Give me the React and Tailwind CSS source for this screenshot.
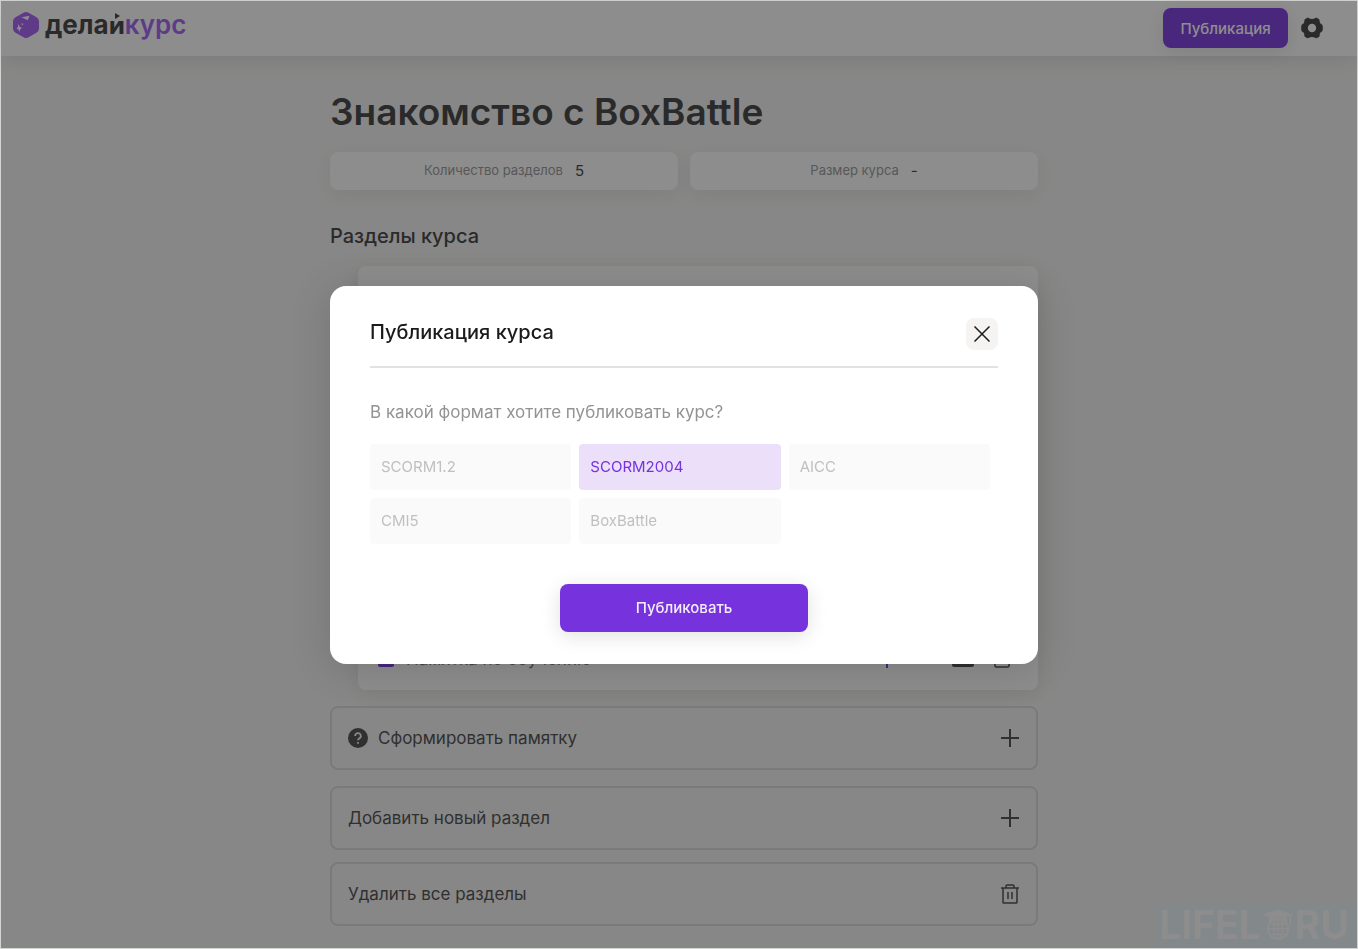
import React, { useState } from 'react';

const formats = ['SCORM1.2', 'SCORM2004', 'AICC', 'CMI5', 'BoxBattle'];

const PlusIcon = () => (
  <svg width="18" height="18" viewBox="0 0 18 18" className="mx-px" fill="none" stroke="currentColor" strokeWidth="2">
    <path d="M9 0v18M0 9h18" />
  </svg>
);

const TrashIcon = () => (
  <svg width="20" height="20" viewBox="0 0 20 20" fill="none" stroke="currentColor" strokeWidth="1.5">
    <path d="M1 4h18M3 4v14.2c0 .5.3.8.8.8h12.4c.5 0 .8-.3.8-.8V4M6 4V2c0-.6.4-1 1-1h6c.6 0 1 .4 1 1v2M8 8v7M12 8v7" />
  </svg>
);

const GearIcon = () => (
  <svg width="24" height="24" viewBox="0 0 24 24" fill="currentColor">
    <path
      fillRule="evenodd"
      d="M9 2.2c-.8-.5-1.8-.4-2.6 0L5.3 3C4.5 3.5 4.2 4.3 4.3 5.1c.2 1.3-.5 2.4-1.6 2.9-.8.4-1.3 1-1.4 1.9-.2 1.4-.2 2.8 0 4.2.1.9.6 1.5 1.4 1.9 1.1.5 1.8 1.6 1.6 2.9-.1.8.2 1.6 1 2.1l1.1.8c.8.4 1.8.5 2.6 0 1.8-1.1 4.2-1.1 6 0 .8.5 1.8.4 2.6 0l1.1-.8c.8-.5 1.1-1.3 1-2.1-.2-1.3.5-2.4 1.6-2.9.8-.4 1.3-1 1.4-1.9.2-1.4.2-2.8 0-4.2-.1-.9-.6-1.5-1.4-1.9-1.1-.5-1.8-1.6-1.6-2.9.1-.8-.2-1.6-1-2.1l-1.1-.8c-.8-.4-1.8-.5-2.6 0-1.8 1.1-4.2 1.1-6 0ZM12 7.8a4.2 4.2 0 1 0 0 8.4 4.2 4.2 0 0 0 0-8.4Z"
    />
  </svg>
);

const Logo = () => (
  <a href="#home" className="flex items-center gap-1.5">
    <svg width="26" height="26" viewBox="0 0 26 26">
      <path d="M10.5.8a5 5 0 0 1 5 0l8 4.4A5 5 0 0 1 26 9.5v7a5 5 0 0 1-2.5 4.3l-8 4.5a5 5 0 0 1-5 0l-8-4.5A5 5 0 0 1 0 16.500v-7a5 5 0 0 1 2.5-4.300Z" fill="#a259f5" />
      <path d="M8.5 5.200 16.500 3.800 14.800 8.200Z" fill="#fff" />
      <path d="M5.500 12 6.800 14.800 9 16 7.200 17.200 6.500 20 5.500 17.500 3.500 16.500 5 15ZM8.500 11l2 1-1.500 1.500Z" fill="#fff" />
    </svg>
    <span className="text-[26px] leading-7 font-bold text-[#383838]">
      дела
      <span className="relative">
        й
        <svg width="15" height="8" viewBox="0 0 15 8" className="absolute top-1 left-0">
          <path d="M0 0h15v8H0Z" fill="#fff" />
          <path d="M6 0 11 3 6 6Z" fill="#383838" />
        </svg>
      </span>
      <span className="font-semibold text-[#a259f5]">курс</span>
    </span>
  </a>
);

const Stat = ({ label, value }) => (
  <div className="flex h-[38px] flex-1 items-center justify-center gap-3 rounded-lg bg-white shadow-[0_4px_20px_rgba(0,0,0,0.08)]">
    <span className="text-[13px] text-[#939393]">{label}</span>
    <span className="text-[15px] text-[#383838]">{value}</span>
  </div>
);

const ActionRow = ({ children, lead, icon }) => (
  <button className="flex h-16 w-full items-center justify-between rounded-lg border-2 border-[#d8d8d7] px-4 text-left text-[17px] text-[#444]">
    <span className="flex items-center gap-2.5">
      {lead}
      <span className="pt-0.5">{children}</span>
    </span>
    {icon}
  </button>
);

const PublishDialog = () => {
  const [format, setFormat] = useState('SCORM2004');

  return (
    <div
      role="dialog"
      aria-labelledby="publish-title"
      className="w-full max-w-[708px] rounded-2xl bg-white px-10 py-8 shadow-[0_4px_40px_rgba(0,0,0,0.15)]"
    >
      <div className="flex items-start justify-between border-b-2 border-[#e2e2e2] pb-4">
        <h2 id="publish-title" className="text-xl font-medium text-[#1b1b1b]">Публикация курса</h2>
        <button aria-label="Закрыть" className="flex size-8 items-center justify-center rounded-lg bg-[#f5f4f2] text-[#1b1b1b]">
          <svg width="16" height="16" viewBox="0 0 16 16" fill="none" stroke="currentColor" strokeWidth="1.5">
            <path d="m.5.5 15 15M15.5.5l-15 15" />
          </svg>
        </button>
      </div>

      <fieldset className="mt-8">
        <legend className="text-[17px] leading-6 text-[#939393]">В какой формат хотите публиковать курс?</legend>
        <div className="mt-5 mr-2 grid grid-cols-3 gap-2">
          {formats.map((name) => (
            <label
              key={name}
              className={`flex h-[46px] cursor-pointer items-center rounded px-[11px] pt-0.5 text-[15px] ${
                format === name ? 'bg-[#ecdffa] text-[#7632dc]' : 'bg-[#fafafa] text-[#c0c0c0]'
              }`}
            >
              <input
                type="radio"
                name="format"
                value={name}
                checked={format === name}
                onChange={() => setFormat(name)}
                className="sr-only"
              />
              {name}
            </label>
          ))}
        </div>
      </fieldset>

      <button className="mx-auto mt-10 block h-12 w-[248px] rounded-lg bg-[#7632dc] pt-0.5 text-[15px] font-medium text-[#f3edfb] shadow-[0_4px_20px_rgba(0,0,0,0.12)]">
        Публиковать
      </button>
    </div>
  );
};

export default function App() {
  return (
    <div className="min-h-screen border border-[#d3d5d3] bg-[#f3f3f2] font-['Inter','Liberation_Sans',sans-serif] text-[#383838]">
      <header className="flex h-[55px] items-center justify-between bg-white pr-[33px] pb-px pl-3 shadow-[0_4px_20px_rgba(0,0,0,0.1)]">
        <div className="pb-1.5">
          <Logo />
        </div>
        <div className="flex items-center gap-3">
          <button className="h-10 w-[125px] rounded-lg bg-[#7632dc] pt-0.5 text-[15px] font-medium text-white shadow-[0_4px_20px_rgba(0,0,0,0.1)]">
            Публикация
          </button>
          <button aria-label="Настройки">
            <GearIcon />
          </button>
        </div>
      </header>

      <div className="pl-2.5">
        <main className="mx-auto max-w-[708px] pt-8 pb-5">
          <h1 className="text-[37px] leading-12 font-semibold">Знакомство с BoxBattle</h1>
          <div className="mt-4 flex gap-3">
            <Stat label="Количество разделов" value="5" />
            <Stat label="Размер курса" value="-" />
          </div>

          <h2 className="mt-8 text-xl leading-7 font-medium">Разделы курса</h2>
          <div className="mt-4 ml-7 flex min-h-[424px] flex-col justify-end rounded-lg bg-white pr-[26px] pb-[18px] pl-5 shadow-[0_4px_20px_rgba(0,0,0,0.08)]">
            <div className="flex items-center text-[17px] text-[#777]">
              <label className="flex flex-1 items-center gap-3">
                <input type="checkbox" defaultChecked className="size-4 accent-[#7632dc]" />
                Памятка по обучению
              </label>
              <svg width="18" height="18" viewBox="0 0 18 18" className="mr-14" fill="none" stroke="#7632dc" strokeWidth="2">
                <path d="M9 0v18M0 9h18" />
              </svg>
              <svg width="22" height="16" viewBox="0 0 22 16" className="mr-5" fill="#444">
                <rect width="22" height="16" rx="2" />
              </svg>
              <svg width="16" height="18" viewBox="0 0 16 18" className="mr-0.5" fill="none" stroke="#444" strokeWidth="1.5">
                <path d="M0 4h16M1 4v12c0 .6.4 1 1 1h12c.6 0 1-.4 1-1V4M5 4V1h6v3" />
              </svg>
            </div>
          </div>

          <div className="mt-4">
            <ActionRow
              lead={
                <svg width="20" height="20" viewBox="0 0 20 20">
                  <circle cx="10" cy="10" r="10" fill="#444" />
                  <path d="M7.2 8a2.8 2.8 0 1 1 4.2 2.4c-.9.5-1.4.9-1.4 1.9M10 14v1.8" fill="none" stroke="#f3f3f2" strokeWidth="1.8" />
                </svg>
              }
              icon={<PlusIcon />}
            >
              Сформировать памятку
            </ActionRow>
          </div>
          <div className="mt-4">
            <ActionRow icon={<PlusIcon />}>Добавить новый раздел</ActionRow>
          </div>
          <div className="mt-3">
            <ActionRow icon={<TrashIcon />}>Удалить все разделы</ActionRow>
          </div>
        </main>
      </div>

      <div className="fixed inset-px flex items-center justify-center bg-[#1b1b1b]/50 pl-2.5">
        <PublishDialog />
      </div>

      <div className="fixed right-px bottom-0.5 flex h-11 items-center gap-0.5 bg-[#83888b] pr-2 pl-1 text-[39px] font-bold text-[#8d8d8d]">
        LIFEL
        <svg width="30" height="34" viewBox="0 0 32 34" fill="none" stroke="currentColor" strokeWidth="1.5">
          <path d="M1 6 16 1l14 5-14 6ZM7 9v5c5-3 13-3 18 0V9" fill="currentColor" />
          <path d="M29 7v11" strokeWidth="2" />
          <circle cx="16" cy="21" r="11" strokeWidth="2" />
          <ellipse cx="16" cy="21" rx="5" ry="11" />
          <path d="M16 10v22M5 21h22M7 27h18M7 16h18" />
        </svg>
        RU
      </div>
    </div>
  );
}
